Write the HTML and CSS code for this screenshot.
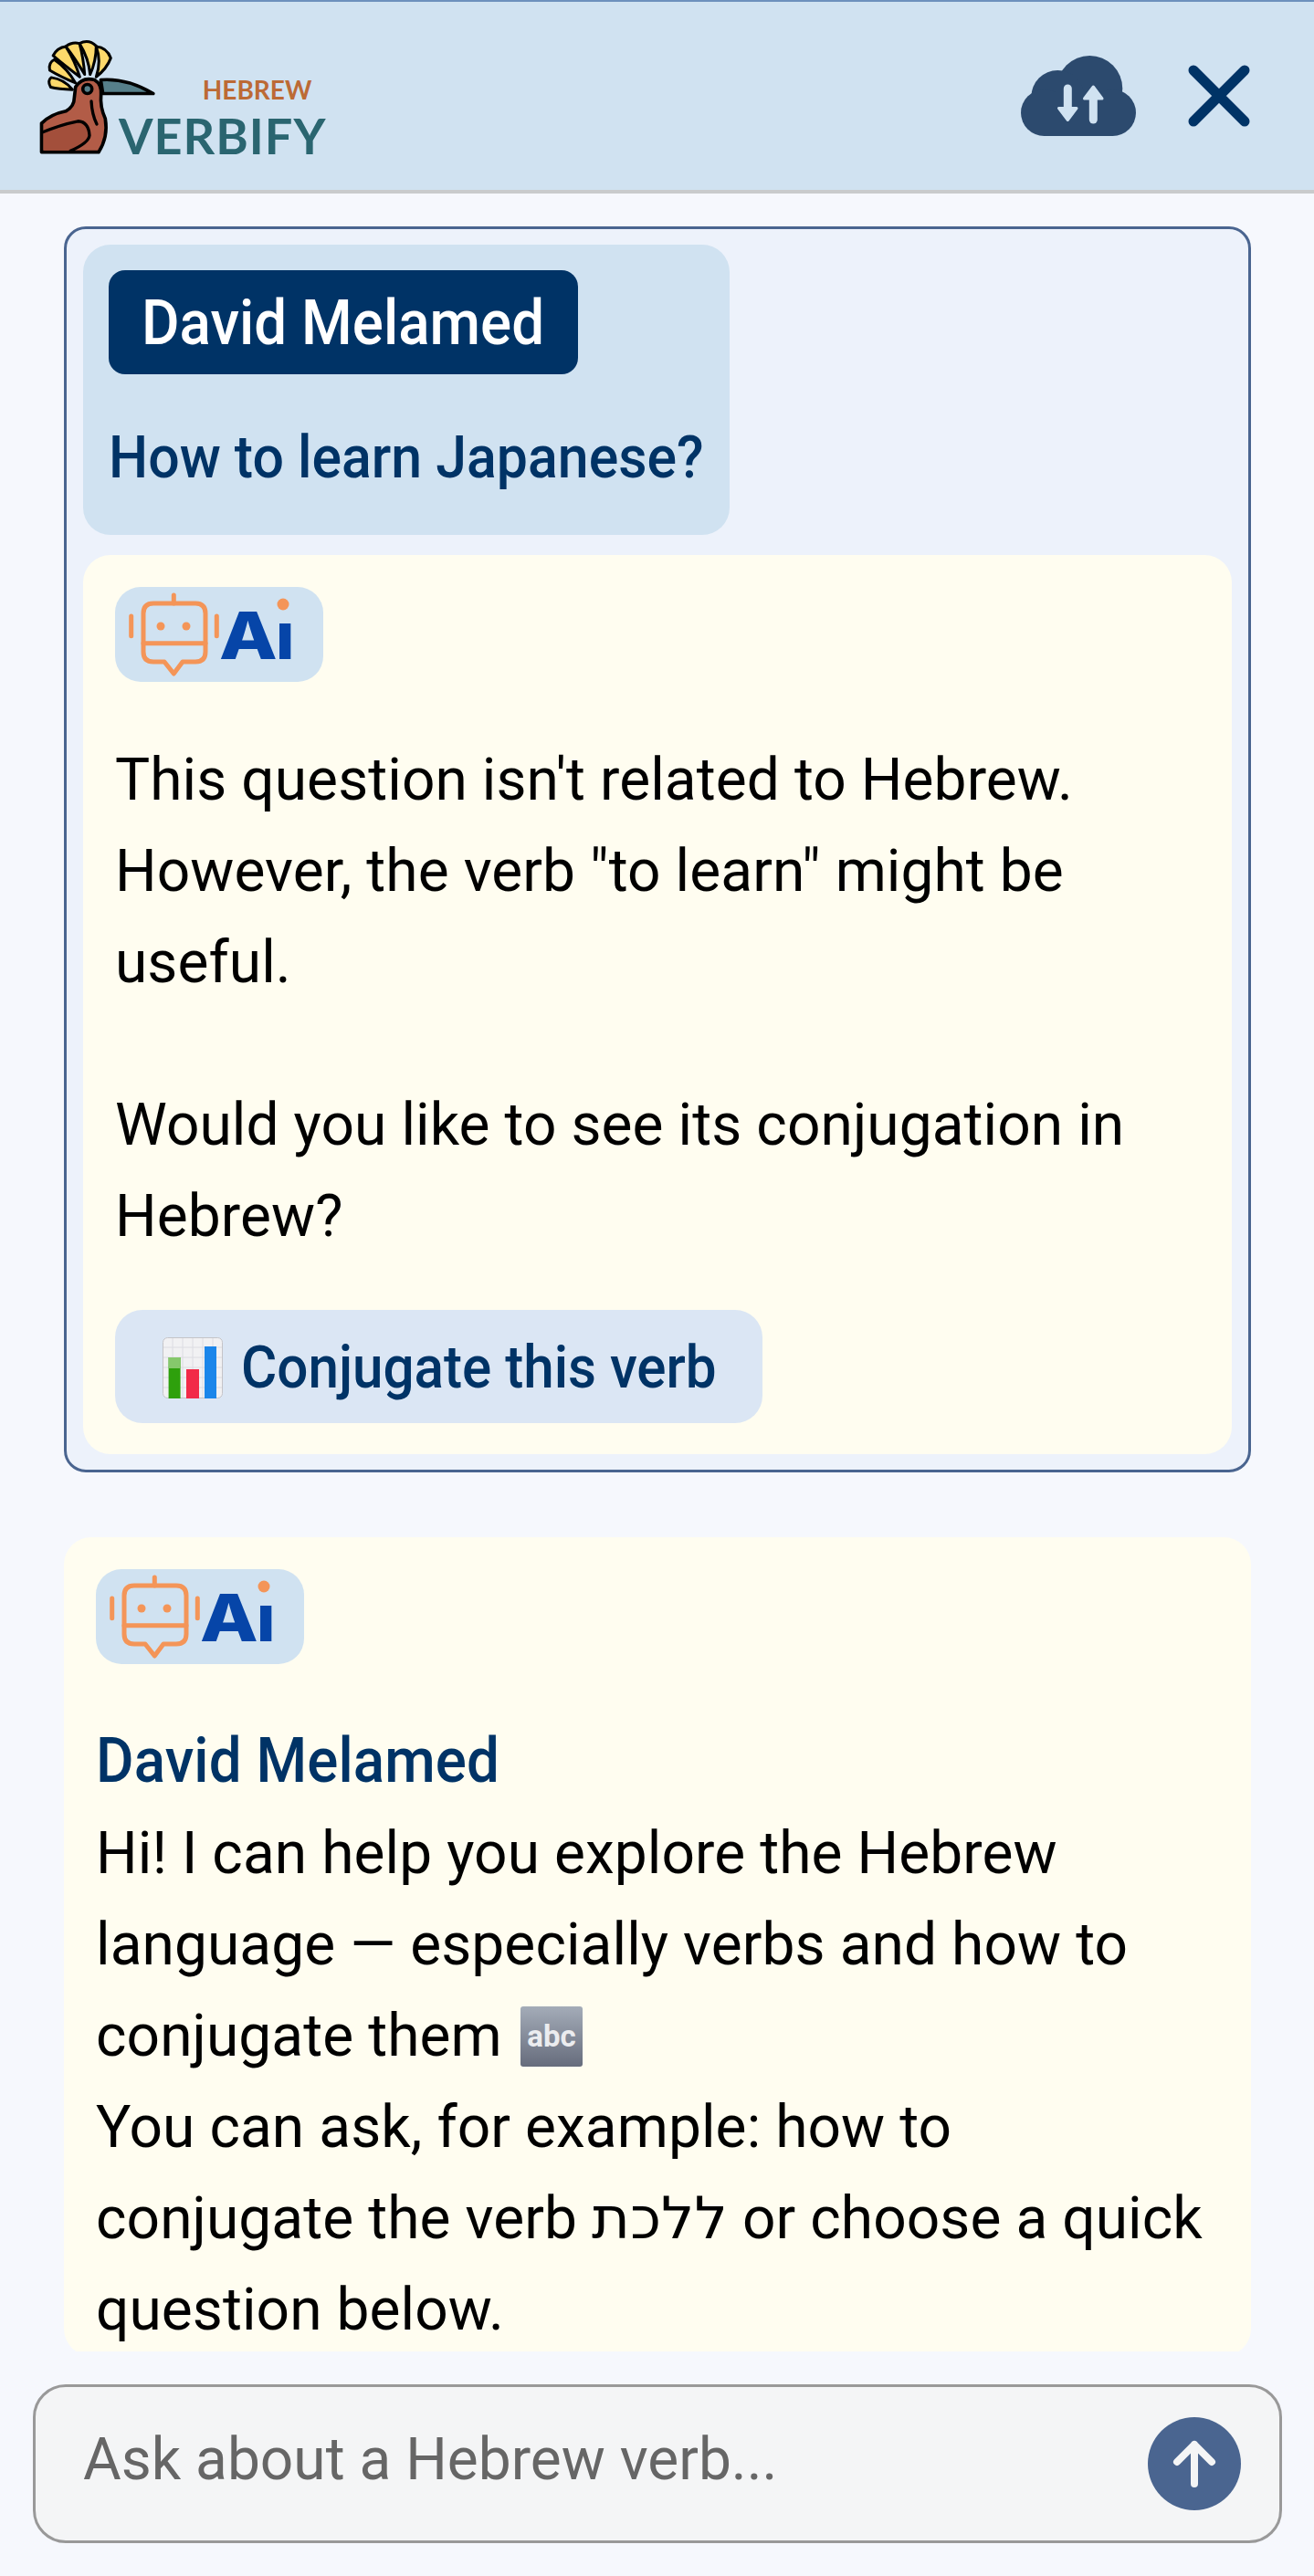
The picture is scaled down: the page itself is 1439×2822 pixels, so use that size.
FILE: index.html
```html
<!DOCTYPE html>
<html lang='en'><head>
<meta charset='utf-8' />
<meta name='viewport' content='width=device-width, initial-scale=1' />
<title>Hebrew Verbify</title>
<link rel="stylesheet" href="styles.css">
</head><body>

<header class='topbar'>
	<div class='logo'>
		<svg class='bird' viewBox='60 65 390 385'>
			<g stroke='#000' stroke-width='9' stroke-linejoin='round' stroke-linecap='round'>
				<path fill='#fdd96b' d='M172 234 Q125 232 100 226 Q88 205 102 194 Q145 200 172 234 Z' />
				<path fill='#fdd96b' d='M182 212 Q130 190 97 170 Q92 145 112 135 Q155 165 182 212 Z' />
				<path fill='#fdd96b' d='M196 192 Q140 150 108 122 Q122 95 150 92 Q180 140 196 192 Z' />
				<path fill='#fdd96b' d='M212 184 Q180 130 150 92 Q170 76 195 82 Q208 130 212 184 Z' />
				<path fill='#fdd96b' d='M230 184 Q225 130 195 82 Q225 66 250 90 Q250 140 230 184 Z' />
				<path fill='#fdd96b' d='M250 192 Q268 140 250 92 Q285 95 298 130 Q285 165 250 192 Z' />
			</g>
			<g stroke='#000' stroke-width='11' stroke-linejoin='round' stroke-linecap='round'>
				<path fill='#567f8a' d='M265 202 Q350 195 438 247 L272 247 Z' />
				<path fill='#b25c47' d='M182 225 Q205 190 245 202 Q268 215 266 250 Q262 290 280 330 Q290 390 258 440 L70 440 L70 345 Q100 315 150 305 Q178 290 178 260 Z' />
			</g>
			<path fill='#a34f3b' d='M78 372 Q140 345 195 340 Q235 350 228 395 Q215 420 165 434 L78 434 Z' />
			<g fill='none' stroke='#000' stroke-width='10' stroke-linecap='round' stroke-linejoin='round'>
				<path d='M72 375 Q130 350 190 338 Q225 340 228 385 Q225 410 165 436' />
				<path d='M234 272 Q236 315 252 348' />
			</g>
			<circle cx='221' cy='232' r='15' fill='#567f8a' stroke='#000' stroke-width='11' />
		</svg>
		<div class='logo_text'>
			<span class='logo_small'>HEBREW</span>
			<span class='logo_big'>VERBIFY</span>
		</div>
	</div>
	<div class='topbar_icons'>
		<svg class='cloud' viewBox='0 0 126 88'>
			<g fill='#2c4a6e'>
				<circle cx='75.3' cy='36' r='36' />
				<circle cx='40.3' cy='45' r='29' />
				<circle cx='25.5' cy='62.5' r='25.5' />
				<circle cx='100.5' cy='62.5' r='25.5' />
				<rect x='25' y='40' width='76' height='48' />
			</g>
			<g fill='#d0e2f1' stroke='#d0e2f1' stroke-linejoin='round' stroke-width='3'>
				<path d='M41.5 57.5 H61 L51.3 70.5 Z' />
				<path d='M69.5 47 H89 L79.3 34 Z' />
			</g>
			<g stroke='#d0e2f1' stroke-width='9' stroke-linecap='round'>
				<path d='M51.3 36 V58' />
				<path d='M79.3 47 V70' />
			</g>
		</svg>
		<svg class='close' viewBox='0 0 68 68'>
			<path d='M6 6 L62 62 M62 6 L6 62' fill='none' stroke='#003366' stroke-width='11' stroke-linecap='round' />
		</svg>
	</div>
</header>

<main class='chat'>
	<section class='thread'>
		<div class='question'>
			<div class='user_name'><span class='squeeze squeeze_name'>David Melamed</span></div>
			<div class='question_text'><span class='squeeze squeeze_question'>How to learn Japanese?</span></div>
		</div>
		<div class='answer answer_inner'>
			<div class='ai_badge'>
				<svg width='228' height='104' viewBox='0 0 228 104'>
					<g fill='none' stroke='#f49558' stroke-width='5' stroke-linecap='round' stroke-linejoin='round'>
						<path d='M64.3 9 V18' />
						<path d='M17.7 32 V53.7' />
						<path d='M111.3 32 V53.7' />
						<path d='M42 18 H88 Q99 18 99 29 V71 Q99 82 88 82 H74 L64.3 95 L54 82 H42 Q31 82 31 71 V29 Q31 18 42 18 Z' />
						<path d='M31 61.7 H99' />
					</g>
					<circle cx='50' cy='43' r='4.5' fill='#f49558' />
					<circle cx='78' cy='43' r='4.5' fill='#f49558' />
					<text class='ai_text' transform='translate(114 79) scale(1.15 1)'>A</text>
					<text class='ai_text' x='176' y='79'>&#305;</text>
					<circle cx='184' cy='19' r='6.5' fill='#f49558' />
				</svg>
			</div>
			<p>This question isn't related to Hebrew. However, the verb "to learn" might be useful.</p>
			<p class='para_gap'>Would you like to see its conjugation in Hebrew?</p>
			<button class='conjugate' type='button'>
				<svg class='emoji_chart' viewBox='0 0 66 67'>
					<rect x='0.5' y='0.5' width='65' height='66' rx='5' fill='#f1f1f3' stroke='#c4c4c8' />
					<path d='M1 11 H65 M1 22 H65 M1 33 H65 M1 44 H65 M1 55 H65 M11 1 V66 M22 1 V66 M33 1 V66 M44 1 V66 M55 1 V66' stroke='#dcdce2' stroke-width='1' />
					<rect x='6.6' y='22' width='13' height='45' fill='#2ea00c' />
					<rect x='6.6' y='22' width='13' height='12' fill='#86c86c' />
					<rect x='26' y='35' width='14' height='32' fill='#f22a48' />
					<rect x='46' y='10' width='13' height='57' fill='#1b86ea' />
				</svg>
				<span class='squeeze squeeze_button'>Conjugate this verb</span>
			</button>
		</div>
	</section>

	<section class='answer answer_solo'>
		<div class='ai_badge'>
			<svg width='228' height='104' viewBox='0 0 228 104'>
				<g fill='none' stroke='#f49558' stroke-width='5' stroke-linecap='round' stroke-linejoin='round'>
					<path d='M64.3 9 V18' />
					<path d='M17.7 32 V53.7' />
					<path d='M111.3 32 V53.7' />
					<path d='M42 18 H88 Q99 18 99 29 V71 Q99 82 88 82 H74 L64.3 95 L54 82 H42 Q31 82 31 71 V29 Q31 18 42 18 Z' />
					<path d='M31 61.7 H99' />
				</g>
				<circle cx='50' cy='43' r='4.5' fill='#f49558' />
				<circle cx='78' cy='43' r='4.5' fill='#f49558' />
				<text class='ai_text' transform='translate(114 79) scale(1.15 1)'>A</text>
				<text class='ai_text' x='176' y='79'>&#305;</text>
				<circle cx='184' cy='19' r='6.5' fill='#f49558' />
			</svg>
		</div>
		<div class='welcome'>
			<strong class='squeeze squeeze_name'>David Melamed</strong><br>
			Hi! I can help you explore the Hebrew language — especially verbs and how to conjugate them
			<svg class='emoji_abc' viewBox='0 0 68 66'>
				<defs><linearGradient id='abc_bg' x1='0' y1='0' x2='0' y2='1'><stop offset='0' stop-color='#a4acb8' /><stop offset='1' stop-color='#666c7c' /></linearGradient></defs>
				<rect width='68' height='66' rx='3' fill='url(#abc_bg)' />
				<text class='abc_text' x='34' y='44' text-anchor='middle'>abc</text>
			</svg><br>
			You can ask, for example: how to conjugate the verb <span class='hebrew'>ללכת</span> or choose a quick question below.
		</div>
	</section>
</main>

<footer class='composer'>
	<div class='input_box'>
		<input class='ask' type='text' placeholder='Ask about a Hebrew verb...' />
		<button class='send' type='button' aria-label='Send'>
			<svg viewBox='0 0 48 52' width='48' height='52'>
				<path d='M24 48 V5 M5 24 L24 5 L43 24' fill='none' stroke='#f4f5f6' stroke-width='8' stroke-linecap='round' stroke-linejoin='round' />
			</svg>
		</button>
	</div>
</footer>

</body></html>
```

FILE: styles.css
```css
:root {
	--page-bg   : #f6f8fd;
	--navy      : #003366;
	--sky       : #d0e2f1;
	--slate     : #4a6590;
	--cream     : #fffdf0;
}
* {
	box-sizing : border-box;
}
html, body {
	margin : 0;
	height : 100%;
}
body {
	display          : flex;
	flex-direction   : column;
	height           : 100vh;
	overflow         : hidden;
	background-color : var(--page-bg);
	color            : #000;
	font-family      : Roboto, "Noto Sans", sans-serif;
	font-size        : 64px;
	line-height      : 100px;
}
.topbar {
	flex             : 0 0 212px;
	display          : flex;
	align-items      : center;
	justify-content  : space-between;
	padding          : 0 70px 0 42px;
	background-color : var(--sky);
	border-top       : 2px solid #6d90bd;
	border-bottom    : 4px solid #c9cbcc;
}
.logo {
	display     : flex;
	align-items : flex-end;
	margin-top  : 2px;
}
.bird {
	width        : 130px;
	height       : 128px;
	margin-right : -42px;
}
.logo_text {
	display        : flex;
	flex-direction : column;
	align-items    : flex-end;
	margin-bottom  : -4px;
	font-family    : Lato, sans-serif;
}
.logo_small {
	color         : #bc6a35;
	font-size     : 28px;
	line-height   : 30px;
	margin-right  : 16px;
	margin-bottom : 11px;
	font-weight   : 700;
}
.logo_big {
	color          : #2a6570;
	font-size      : 54px;
	font-weight    : 700;
	line-height    : 50px;
	letter-spacing : 1px;
}
.topbar_icons {
	display     : flex;
	align-items : center;
	gap         : 57px;
}
.cloud {
	width  : 126px;
	height : 88px;
}
.close {
	width  : 68px;
	height : 68px;
}
.chat {
	flex       : 1 1 0;
	min-height : 0;
	overflow   : hidden;
	padding    : 36px 69px 0 70px;
}
.thread {
	padding          : 17px 18px;
	background-color : #edf2fb;
	border           : 3px solid var(--slate);
	border-radius    : 24px;
	margin-bottom    : 71px;
}
.question {
	display          : inline-block;
	padding          : 28px 28px 34px;
	background-color : var(--sky);
	border-radius    : 30px;
	margin-bottom    : 22px;
	vertical-align   : top;
}
/* medium weight text in the app is narrower than our Roboto */
.squeeze {
	display          : inline-block;
	transform-origin : left center;
}
.squeeze_name {
	transform    : scaleX(0.937);
	margin-right : -29px;
}
.squeeze_question {
	transform    : scaleX(0.95);
	margin-right : -34px;
}
.squeeze_button {
	transform    : scaleX(0.94);
	margin-right : -33px;
}
.user_name {
	display          : inline-block;
	padding          : 8px 36px 6px;
	background-color : var(--navy);
	color            : #fff;
	font-size        : 68px;
	font-weight      : 500;
	border-radius    : 18px;
	vertical-align   : top;
}
.question_text {
	color       : var(--navy);
	font-weight : 500;
	margin-top  : 42px;
}
.answer {
	background-color : var(--cream);
	border-radius    : 30px;
}
.answer_inner {
	padding : 35px 35px 34px;
}
.answer_solo {
	padding : 35px 35px 0;
}
.ai_badge {
	height           : 104px;
	width            : 228px;
	background-color : var(--sky);
	border-radius    : 28px;
}
.ai_text {
	font-family : Inter, sans-serif;
	font-size   : 72px;
	font-weight : 800;
	fill        : #0645a8;
}
.answer p {
	margin         : 58px 0 0;
	letter-spacing : 0.08px;
}
.answer p.para_gap {
	margin-top : 78px;
}
.conjugate {
	display          : inline-flex;
	align-items      : center;
	gap              : 20px;
	height           : 124px;
	margin-top       : 52px;
	padding          : 2px 50px 0 52px;
	background-color : #dbe6f4;
	color            : var(--navy);
	font-family      : Roboto, sans-serif;
	font-size        : 64px;
	font-weight      : 500;
	border           : 0;
	border-radius    : 30px;
	vertical-align   : top;
}
.emoji_chart {
	width  : 66px;
	height : 67px;
}
.welcome {
	margin-top     : 56px;
	letter-spacing : 0.08px;
}
.welcome strong {
	color       : var(--navy);
	font-size   : 68px;
	font-weight : 500;
}
.emoji_abc {
	width          : 68px;
	height         : 66px;
	margin-left    : 4px;
	vertical-align : -12px;
}
.abc_text {
	font-family : Roboto, sans-serif;
	font-size   : 33px;
	font-weight : 700;
	fill        : #ebecef;
}
.hebrew {
	font-family : "Noto Sans", "DejaVu Sans", sans-serif;
	line-height : 1;
}
.composer {
	flex    : 0 0 246px;
	padding : 36px 35px 36px 36px;
}
.input_box {
	display          : flex;
	align-items      : center;
	height           : 174px;
	padding          : 0 42px 0 52px;
	background-color : #f4f5f6;
	border           : 3px solid #999;
	border-radius    : 36px;
}
.ask {
	flex        : 1;
	min-width   : 0;
	border      : 0;
	outline     : 0;
	background  : transparent;
	font-family : Roboto, sans-serif;
	font-size   : 64px;
	color       : #000;
	padding     : 0 0 10px;
}
.ask::placeholder {
	color   : #666;
	opacity : 1;
}
.send {
	display          : flex;
	align-items      : center;
	justify-content  : center;
	width            : 102px;
	height           : 102px;
	padding          : 0;
	background-color : var(--slate);
	border           : 0;
	border-radius    : 50%;
}
```
